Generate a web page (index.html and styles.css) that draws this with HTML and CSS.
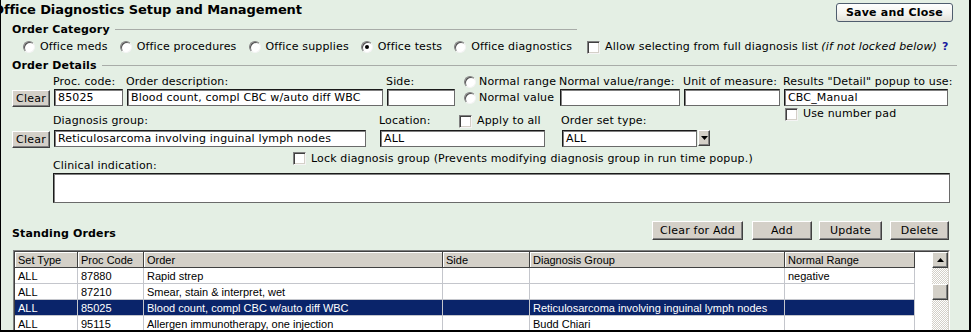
FILE: index.html
```html
<!DOCTYPE html>
<html lang="en">
<head>
<meta charset="utf-8">
<title>Office Diagnostics Setup and Management</title>
<link rel="stylesheet" href="styles.css">
</head>
<body>
<div class="page">
  <div class="titlebar">
    <div class="title">Office Diagnostics Setup and Management</div>
    <button class="save-btn">Save and Close</button>
  </div>

  <div class="sec-head sec-cat"><span class="sec-title">Order Category</span><span class="rule"></span></div>
  <div class="radios">
    <label class="opt"><span class="radio"></span>Office meds</label>
    <label class="opt"><span class="radio"></span>Office procedures</label>
    <label class="opt"><span class="radio"></span>Office supplies</label>
    <label class="opt"><span class="radio on"></span>Office tests</label>
    <label class="opt"><span class="radio"></span>Office diagnostics</label>
    <label class="opt allow"><span class="check"></span>Allow selecting from full diagnosis list <em class="note">(if not locked below)</em><b class="help">?</b></label>
  </div>

  <div class="sec-head sec-det"><span class="sec-title">Order Details</span><span class="rule"></span></div>
  <div class="grid-detail">
    <span></span>
    <span class="lbl">Proc. code:</span>
    <span class="lbl">Order description:</span>
    <span class="lbl">Side:</span>
    <label class="opt in-cell"><span class="radio"></span>Normal range</label>
    <span class="lbl">Normal value/range:</span>
    <span class="lbl">Unit of measure:</span>
    <span class="lbl">Results "Detail" popup to use:</span>

    <button class="btn clear">Clear</button>
    <div class="field">85025</div>
    <div class="field">Blood count, compl CBC w/auto diff WBC</div>
    <div class="field"></div>
    <label class="opt in-cell in-cell-field"><span class="radio"></span>Normal value</label>
    <div class="field"></div>
    <div class="field"></div>
    <div class="field">CBC_Manual</div>
  </div>

  <div class="grid-diag">
    <span></span>
    <span class="lbl">Diagnosis group:</span>
    <div class="loc-head"><span class="lbl loc-lbl">Location:</span><label class="opt"><span class="check"></span>Apply to all</label></div>
    <span class="lbl">Order set type:</span>
    <label class="opt numpad"><span class="check"></span>Use number pad</label>

    <button class="btn clear">Clear</button>
    <div class="field diag-field">Reticulosarcoma involving inguinal lymph nodes</div>
    <div class="field loc-field">ALL</div>
    <div class="select"><div class="field sel-field">ALL</div><span class="sel-arrow"><svg width="7" height="4" viewBox="0 0 7 4"><polygon points="0,0 7,0 3.5,4" fill="#000"/></svg></span></div>
    <span></span>
  </div>

  <div class="lock-row">
    <span class="clin">Clinical indication:</span>
    <label class="opt lock"><span class="check"></span>Lock diagnosis group (Prevents modifying diagnosis group in run time popup.)</label>
  </div>
  <div class="textarea"></div>

  <div class="standing">
    <span class="sec-title">Standing Orders</span>
    <div class="actions">
      <button class="btn gbtn w-cfa">Clear for Add</button>
      <button class="btn gbtn w-add">Add</button>
      <button class="btn gbtn w-upd">Update</button>
      <button class="btn gbtn w-del">Delete</button>
    </div>
  </div>

  <div class="frame">
    <div class="frame-in">
      <div class="tbl">
        <div class="tr th">
          <span>Set Type</span><span>Proc Code</span><span>Order</span><span>Side</span><span>Diagnosis Group</span><span>Normal Range</span>
        </div>
        <div class="tr">
          <span>ALL</span><span>87880</span><span>Rapid strep</span><span></span><span></span><span>negative</span>
        </div>
        <div class="tr">
          <span>ALL</span><span>87210</span><span>Smear, stain &amp; interpret, wet</span><span></span><span></span><span></span>
        </div>
        <div class="tr sel">
          <span>ALL</span><span>85025</span><span>Blood count, compl CBC w/auto diff WBC</span><span></span><span>Reticulosarcoma involving inguinal lymph nodes</span><span></span>
        </div>
        <div class="tr">
          <span>ALL</span><span>95115</span><span>Allergen immunotherapy, one injection</span><span></span><span>Budd Chiari</span><span></span>
        </div>
      </div>
      <div class="filler"></div>
      <div class="scrollbar">
        <span class="sb-btn"><svg width="7" height="4" viewBox="0 0 7 4"><polygon points="3.5,0 7,4 0,4" fill="#000"/></svg></span>
        <span class="sb-track"></span>
        <span class="sb-btn"></span>
      </div>
    </div>
  </div>
</div>
</body>
</html>
```

FILE: styles.css
```css
* { box-sizing: border-box; }
html, body { margin: 0; padding: 0; }
body {
  width: 971px;
  height: 332px;
  overflow: hidden;
  background: #e4efe4;
  font-family: "DejaVu Sans", Verdana, sans-serif;
  font-size: 11px;
  letter-spacing: 0.15px;
  color: #000;
}
.page {
  width: 971px;
  height: 332px;
  background: #e4efe4;
  border-left: 1px solid #000;
  border-right: 2px solid #000;
  border-bottom: 2px solid #000;
  overflow: hidden;
}

/* title bar */
.titlebar {
  display: flex;
  justify-content: space-between;
  align-items: flex-start;
  height: 23px;
  padding-right: 16px;
}
.title {
  margin-left: -8px;
  font-size: 13px;
  font-weight: bold;
  line-height: 19px;
  letter-spacing: -0.1px;
  white-space: nowrap;
}
.save-btn {
  margin-top: 3px;
  width: 117px;
  height: 19px;
  padding: 0;
  font-family: inherit;
  font-size: 11px;
  font-weight: bold;
  letter-spacing: 0.2px;
  color: #000;
  border: 1px solid #4f5d6e;
  border-radius: 3px;
  background: linear-gradient(#ffffff, #f4f4f0 55%, #e2e2da);
}

/* section headings */
.sec-head {
  display: flex;
  align-items: center;
  height: 14px;
  margin-left: 11px;
}
.sec-cat { width: 565px; }
.sec-det { width: 945px; margin-top: 5px; }
.sec-title {
  font-weight: bold;
  line-height: 14px;
  white-space: nowrap;
}
.rule {
  flex: 1;
  height: 0;
  margin-left: 5px;
  margin-top: -1px;
  border-top: 1px solid #a8aca8;
}

/* radio / checkbox options */
.opt {
  display: inline-flex;
  align-items: center;
  white-space: nowrap;
  line-height: 14px;
}
.radio {
  position: relative;
  flex: none;
  width: 12px;
  height: 12px;
  margin-right: 5px;
  border-radius: 50%;
  background: #fff;
  border: 1px solid;
  border-color: #808080 #f4f4f4 #f4f4f4 #808080;
  box-shadow: inset 1px 1px 0 #505050;
}
.radio.on::after {
  content: "";
  position: absolute;
  left: 3px;
  top: 3px;
  width: 4px;
  height: 4px;
  border-radius: 50%;
  background: #000;
}
.check {
  flex: none;
  width: 13px;
  height: 13px;
  margin-right: 5px;
  background: #fff;
  border: 1px solid;
  border-color: #808080 #f4f4f4 #f4f4f4 #808080;
  box-shadow: inset 1px 1px 0 #404040, inset -1px -1px 0 #d4d0c8;
}

.radios {
  display: flex;
  align-items: center;
  height: 14px;
  margin-top: 3px;
  padding-left: 22px;
}
.radios .opt { margin-right: 12px; }
.radios .allow { margin-right: 0; margin-left: 3px; }
.note { font-style: italic; margin-left: 3px; }
.help { color: #1a1aa0; margin-left: 5px; }

/* fields */
.field {
  height: 17px;
  background: #fff;
  border: 1px solid;
  border-color: #1a1a1a #6a6a6a #6a6a6a #1a1a1a;
  box-shadow: inset 1px 1px 0 #808080;
  padding: 0 3px;
  line-height: 15px;
  white-space: nowrap;
  overflow: hidden;
}
.lbl {
  line-height: 14px;
  white-space: nowrap;
  margin-left: -1px;
}

.btn {
  padding: 0;
  font-family: inherit;
  font-size: 11px;
  letter-spacing: 0.2px;
  color: #000;
  background: #d4d0c8;
  border: 1px solid;
  border-color: #ffffff #404040 #404040 #ffffff;
  box-shadow: inset -1px -1px 0 #808080;
}
.clear {
  width: 38px;
  height: 17px;
  margin-top: 1px;
  line-height: 14px;
}

/* order details grid */
.grid-detail {
  display: grid;
  grid-template-columns: 38px 69px 256px 68px 97px 120px 96px 164px;
  column-gap: 4px;
  row-gap: 0;
  margin-left: 11px;
  margin-top: 2px;
  align-items: start;
}
.in-cell { padding-left: 5px; }
.in-cell .radio { margin-right: 3px; }
.in-cell-field { height: 17px; }

/* diagnosis grid */
.grid-diag {
  display: grid;
  grid-template-columns: 42px 326px 182px 223px 1fr;
  row-gap: 2px;
  margin-left: 11px;
  margin-top: 7px;
  align-items: start;
}
.loc-head { display: flex; align-items: center; }
.loc-lbl { width: 80px; }
.numpad { margin-top: -7px; }
.diag-field { width: 312px; }
.loc-field { width: 165px; }
.select { display: flex; align-items: flex-start; }
.sel-field { width: 135px; }
.sel-arrow {
  display: flex;
  align-items: center;
  justify-content: center;
  width: 12px;
  height: 16px;
  margin-left: 1px;
  background: #d4d0c8;
  border: 1px solid;
  border-color: #ffffff #404040 #404040 #ffffff;
  box-shadow: inset -1px -1px 0 #808080;
}

/* lock + clinical */
.lock-row {
  display: flex;
  height: 20px;
  margin-top: 4px;
  margin-left: 52px;
}
.clin {
  align-self: flex-end;
  width: 240px;
  line-height: 12px;
  white-space: nowrap;
}
.lock { align-self: flex-start; line-height: 13px; }
.textarea {
  width: 897px;
  height: 30px;
  margin-top: 1px;
  margin-left: 52px;
  background: #fff;
  border: 1px solid;
  border-color: #1a1a1a #6a6a6a #6a6a6a #1a1a1a;
  box-shadow: inset 1px 1px 0 #808080;
}

/* standing orders bar */
.standing {
  display: flex;
  justify-content: space-between;
  align-items: flex-end;
  width: 948px;
  height: 19px;
  margin-top: 18px;
  padding-left: 11px;
}
.standing .sec-title { margin-bottom: -1px; }
.actions { display: flex; }
.gbtn { height: 19px; line-height: 16px; }
.w-cfa { width: 91px; }
.w-add { width: 60px; margin-left: 9px; }
.w-upd { width: 63px; margin-left: 7px; }
.w-del { width: 59px; margin-left: 8px; }

/* grid table */
.frame {
  width: 937px;
  margin-top: 10px;
  margin-left: 12px;
  border: 1px solid;
  border-color: #808080 #ffffff #ffffff #808080;
}
.frame-in {
  display: flex;
  height: 120px;
  background: #fff;
  border: 1px solid;
  border-color: #404040 #d4d0c8 #d4d0c8 #404040;
}
.tbl {
  flex: none;
  width: 900px;
  font-family: "Liberation Sans", Arial, sans-serif;
  font-size: 11px;
  letter-spacing: 0;
}
.tr {
  display: grid;
  grid-template-columns: 63px 66px 299px 87px 255px 130px;
  height: 16px;
}
.tr span {
  border-right: 1px solid #c4c6cc;
  border-bottom: 1px solid #c4c6cc;
  padding-left: 3px;
  line-height: 16px;
  white-space: nowrap;
  overflow: hidden;
}
.th span {
  background: #d4d0c8;
  border-right-color: #404040;
  border-bottom-color: #404040;
  box-shadow: inset 1px 1px 0 #ffffff;
}
.sel span {
  background: #0a246a;
  color: #fff;
}
.filler { flex: 1; }
.scrollbar {
  flex: none;
  width: 16px;
  display: flex;
  flex-direction: column;
  background: repeating-conic-gradient(#d4d0c8 0 25%, #ffffff 0 50%) 0 0 / 2px 2px;
}
.sb-btn {
  display: flex;
  align-items: center;
  justify-content: center;
  height: 16px;
  background: #d4d0c8;
  border: 1px solid;
  border-color: #ffffff #404040 #404040 #ffffff;
  box-shadow: inset -1px -1px 0 #808080;
}
.sb-track { height: 16px; }
```
